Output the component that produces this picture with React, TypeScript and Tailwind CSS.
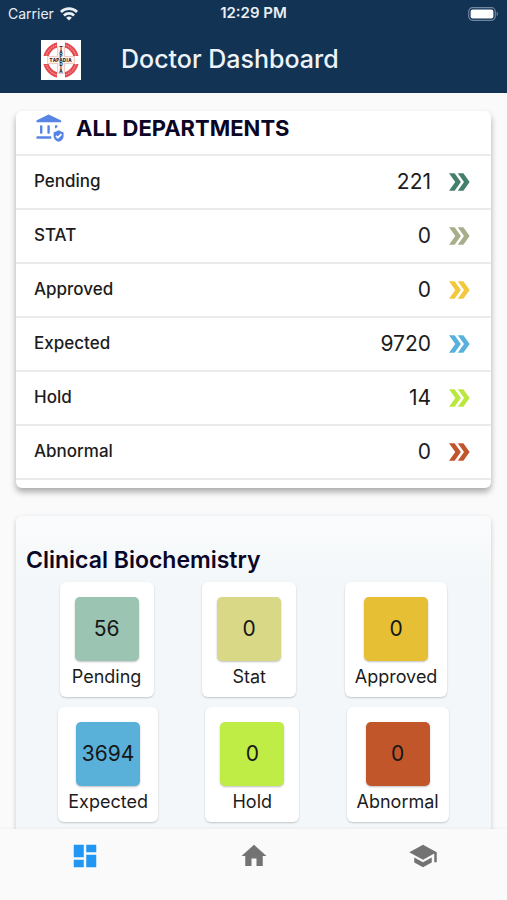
import { MdDashboard, MdDoubleArrow, MdHome, MdSchool } from 'react-icons/md';

type Status = { label: string; value: number; arrow: string };
type Tile = { label: string; value: number; color: string };

const departments: Status[] = [
  { label: 'Pending', value: 221, arrow: 'text-[#437f69]' },
  { label: 'STAT', value: 0, arrow: 'text-[#a9ad88]' },
  { label: 'Approved', value: 0, arrow: 'text-[#f3c83c]' },
  { label: 'Expected', value: 9720, arrow: 'text-[#58b1dc]' },
  { label: 'Hold', value: 14, arrow: 'text-[#bbe83f]' },
  { label: 'Abnormal', value: 0, arrow: 'text-[#c1552b]' },
];

const biochemistry: Tile[][] = [
  [
    { label: 'Pending', value: 56, color: 'bg-[#9bc4b2]' },
    { label: 'Stat', value: 0, color: 'bg-[#d8d886]' },
    { label: 'Approved', value: 0, color: 'bg-[#e6bf35]' },
  ],
  [
    { label: 'Expected', value: 3694, color: 'bg-[#59b1da]' },
    { label: 'Hold', value: 0, color: 'bg-[#bfec45]' },
    { label: 'Abnormal', value: 0, color: 'bg-[#c1562b]' },
  ],
];

function WifiIcon() {
  return (
    <svg viewBox="0 0 18 14" className="h-[14px] w-[18px]" fill="none" stroke="currentColor" strokeWidth="2.7" aria-hidden="true">
      <path d="M.9 5a11.6 11.6 0 0 1 16.2 0" />
      <path d="M3.9 8.500a7.3 7.3 0 0 1 10.2 0" />
      <path d="M9 13.6 6.1 10.8a4.200 4.200 0 0 1 5.800 0z" fill="currentColor" stroke="none" />
    </svg>
  );
}

function BatteryIcon() {
  return (
    <svg viewBox="0 0 31 14" className="h-[14px] w-[31px]" aria-hidden="true">
      <rect x=".7" y=".7" width="26.6" height="12.6" rx="4" fill="none" stroke="#71869e" strokeWidth="1.2" />
      <rect x="2.6" y="2.6" width="22.8" height="8.8" rx="2.2" fill="#fff" />
      <path d="M28.7 4.8c1.6.6 1.6 3.8 0 4.4z" fill="#71869e" />
    </svg>
  );
}

function TapadiaLogo() {
  return (
    <svg viewBox="0 0 40 40" className="size-10" role="img" aria-label="Tapadia">
      <rect width="40" height="40" fill="#fff" />
      <circle cx="20" cy="20" r="15.4" fill="none" stroke="#e5484d" strokeWidth="5" />
      <circle cx="20" cy="20" r="15.4" fill="none" stroke="#f19a9c" strokeWidth="1.4" strokeDasharray="1.200 1" />
      <path d="M16 1h8v15h15v8H24v15h-8V24H1v-8h15z" fill="#fff" />
      <path d="M16.500 6.500h7v10h10v7h-10v10h-7v-10h-10v-7h10z" fill="#fdf3f1" stroke="#efb5b0" strokeWidth=".7" />
      <g fontSize="4.400" fontWeight="800" fill="#222" textAnchor="middle">
        <text x="10" y="21.600">T</text>
        <text x="13.400" y="21.600">A</text>
        <text x="16.700" y="21.600">P</text>
        <text x="20" y="21.600">A</text>
        <text x="23.400" y="21.600">D</text>
        <text x="26.200" y="21.600">I</text>
        <text x="29" y="21.600">A</text>
        <text x="20" y="10">T</text>
        <text x="20" y="13.900">A</text>
        <text x="20" y="17.700">P</text>
        <text x="20" y="25.600">D</text>
        <text x="20" y="29.400">I</text>
        <text x="20" y="33.200">A</text>
      </g>
    </svg>
  );
}

function BankShieldIcon() {
  return (
    <svg viewBox="0 0 28 28" className="size-7" fill="#5785e6" aria-hidden="true">
      <path d="M12.600.400 24.700 6.200q.5.300.5.900v1.100H.400V7.100q0-.6.500-.9z" />
      <rect x="4" y="11.200" width="2.400" height="8.600" rx=".8" />
      <rect x="11.400" y="11.200" width="2.400" height="8.600" rx=".8" />
      <path d="M19 11.200h2.400v2l-2.400 1.300z" />
      <rect x=".400" y="22.200" width="15" height="2.500" rx=".8" />
      <path d="M22.600 16.200l5 2.200v3.500c0 2.900-2.100 5.100-5 5.900-2.900-.8-5-3-5-5.900v-3.500z" />
      <path d="m20 21.800 1.900 1.900 3.500-3.600" fill="none" stroke="#fff" strokeWidth="1.700" />
    </svg>
  );
}

function StatusRow({ label, value, arrow }: Status) {
  return (
    <li className="border-b-2 border-[#ebebeb]">
      <button type="button" className="flex h-[52px] w-full items-center pr-[17px] pl-[18px] text-left">
        <span className="flex-1 text-[17px] font-medium text-[#1c1c1c]">{label}</span>
        <span className="text-[21px] text-[#1c1c1c]">{value}</span>
        <MdDoubleArrow className={`ml-[13px] size-[30px] ${arrow}`} aria-hidden="true" />
      </button>
    </li>
  );
}

function CountTile({ label, value, color }: Tile) {
  return (
    <button type="button" className="mx-[5px] flex flex-col items-center rounded-md bg-white px-[10px] pt-[15px] pb-2 shadow-[0_1px_2px_rgba(0,0,0,0.2)]">
      <span className={`mx-[5px] flex size-16 items-center justify-center rounded-[5px] text-[21px] text-[#161616] shadow-[0_1px_2px_rgba(0,0,0,0.25)] ${color}`}>
        {value}
      </span>
      <span className="mt-1 text-lg leading-6 text-[#1c1c1c]">{label}</span>
    </button>
  );
}

export default function App() {
  return (
    <div className="flex h-screen flex-col bg-[#fafafa] font-['Inter','Liberation_Sans',sans-serif]">
      <header className="bg-[#133354] text-white">
        <div className="grid h-[27px] grid-cols-3 items-center px-2 text-[14px] text-[#e9eef4]">
          <div className="flex items-center gap-[6px]">
            <span>Carrier</span>
            <WifiIcon />
          </div>
          <span className="text-center text-[15px] font-semibold">12:29 PM</span>
          <span className="justify-self-end">
            <BatteryIcon />
          </span>
        </div>
        <div className="flex h-[66px] items-center gap-10 px-[41px]">
          <TapadiaLogo />
          <h1 className="text-[25px] font-medium text-[#eef3f9]">Doctor Dashboard</h1>
        </div>
      </header>

      <main className="min-h-0 flex-1 overflow-y-auto px-4 pt-[18px] [scrollbar-width:none]">
        <section className="rounded-md bg-white pb-2 shadow-[0_4px_6px_rgba(0,0,0,0.32)]">
          <div className="flex h-[45px] items-start gap-3 border-b-2 border-[#ebebeb] pt-[3px] pl-5">
            <BankShieldIcon />
            <h2 className="text-[22px] leading-7 font-bold text-[#0b0626]">ALL DEPARTMENTS</h2>
          </div>
          <ul>
            {departments.map((row) => (
              <StatusRow key={row.label} {...row} />
            ))}
          </ul>
        </section>

        <section className="mt-7 rounded-md bg-gradient-to-b from-[#fafbfc] to-[#f3f7f9] to-20% pt-7 pb-8 shadow-[0_2px_5px_rgba(0,0,0,0.2)]">
          <h2 className="pl-[10px] text-[23px] leading-8 font-semibold text-[#0b0626]">Clinical Biochemistry</h2>
          <div className="mt-[6px] flex flex-col gap-[10px]">
            {biochemistry.map((row) => (
              <div key={row[0].label} className="flex justify-evenly">
                {row.map((tile) => (
                  <CountTile key={tile.label} {...tile} />
                ))}
              </div>
            ))}
          </div>
        </section>
      </main>

      <nav className="relative grid h-[71px] grid-cols-3 items-start bg-[#fafafa] pt-3 text-[#737373] shadow-[0_-1px_3px_rgba(0,0,0,0.04)]">
        <a href="#dashboard" aria-label="Dashboard" aria-current="page" className="flex justify-center text-[#2196f3]">
          <MdDashboard className="size-[30px]" />
        </a>
        <a href="#home" aria-label="Home" className="flex justify-center">
          <MdHome className="size-[30px]" />
        </a>
        <a href="#learning" aria-label="Learning" className="flex justify-center">
          <MdSchool className="size-[30px]" />
        </a>
      </nav>
    </div>
  );
}
